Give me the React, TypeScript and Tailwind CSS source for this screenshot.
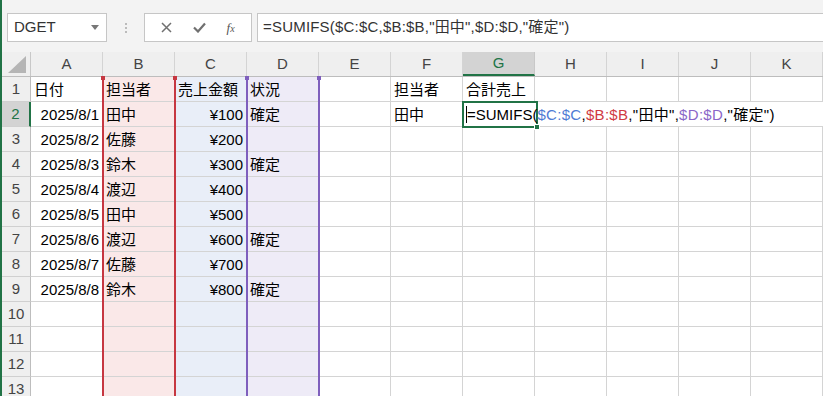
import type { ReactNode } from 'react'

const FONT = { fontFamily: '"Liberation Sans", "Noto Sans CJK JP", sans-serif' }

const COLS = ['A', 'B', 'C', 'D', 'E', 'F', 'G', 'H', 'I', 'J', 'K']

// fill per column index for the highlighted ranges
const FILL = ['', 'bg-[#fae8e8]', 'bg-[#e9eef8]', 'bg-[#eeebf7]', '', '', '', '', '', '', '']

type Cell = { v?: ReactNode; right?: boolean }

const DATA: Cell[][] = [
  [{ v: '日付' }, { v: '担当者' }, { v: '売上金額' }, { v: '状況' }, {}, { v: '担当者' }, { v: '合計売上' }],
  [{ v: '2025/8/1', right: true }, { v: '田中' }, { v: '¥100', right: true }, { v: '確定' }, {}, { v: '田中' }],
  [{ v: '2025/8/2', right: true }, { v: '佐藤' }, { v: '¥200', right: true }],
  [{ v: '2025/8/3', right: true }, { v: '鈴木' }, { v: '¥300', right: true }, { v: '確定' }],
  [{ v: '2025/8/4', right: true }, { v: '渡辺' }, { v: '¥400', right: true }],
  [{ v: '2025/8/5', right: true }, { v: '田中' }, { v: '¥500', right: true }],
  [{ v: '2025/8/6', right: true }, { v: '渡辺' }, { v: '¥600', right: true }, { v: '確定' }],
  [{ v: '2025/8/7', right: true }, { v: '佐藤' }, { v: '¥700', right: true }],
  [{ v: '2025/8/8', right: true }, { v: '鈴木' }, { v: '¥800', right: true }, { v: '確定' }],
  [], [], [], [],
]

function Formula() {
  return (
    <span className="relative z-10 whitespace-nowrap">
      =SUMIFS(
      <span className="tracking-[0.3px]">
        <span className="text-[#4f7bd4]">$C:$C</span>,<span className="text-[#d03a43]">$B:$B</span>,"田中",
        <span className="text-[#8a66c8]">$D:$D</span>,"確定")
      </span>
    </span>
  )
}

function RangeBox({ left, color, handle }: { left: string; color: string; handle: string }) {
  return (
    <div className={`absolute top-0 bottom-0 w-[74px] border-x-2 ${left} ${color}`}>
      <span className={`absolute -left-[3px] -top-[1px] w-[4px] h-[4px] ${handle}`} />
      <span className={`absolute -right-[3px] -top-[1px] w-[4px] h-[4px] ${handle}`} />
    </div>
  )
}

export default function App() {
  return (
    <div className="w-[823px] h-[396px] overflow-hidden flex bg-[#f3f3f3] text-black" style={FONT}>
      <div className="w-[2px] shrink-0 bg-[#217346]" />
      <div className="flex-1 min-w-0 flex flex-col">
        {/* name box + formula bar */}
        <div className="h-[52px] shrink-0 flex items-start pt-[13px] pl-[5px] gap-[5px]">
          <div className="w-[100px] h-[29px] shrink-0 bg-white border border-[#c6c6c6] flex items-center pl-[6px] pr-[7px]">
            <span className="flex-1 text-[15px] text-[#333]">DGET</span>
            <svg width="8" height="5" viewBox="0 0 8 5"><path d="M0 0h8L4 5z" fill="#777" /></svg>
          </div>
          <div className="w-[27px] h-[29px] shrink-0 flex flex-col items-center justify-center gap-[2px]">
            <span className="w-[2px] h-[2px] bg-[#bbb]" />
            <span className="w-[2px] h-[2px] bg-[#bbb]" />
            <span className="w-[2px] h-[2px] bg-[#bbb]" />
          </div>
          <div className="w-[108px] h-[29px] shrink-0 bg-white border border-[#c6c6c6] flex items-center justify-around px-[6px]">
            <svg width="11" height="11" viewBox="0 0 11 11"><path d="M1 1l9 9M10 1l-9 9" stroke="#707070" strokeWidth="1.5" /></svg>
            <svg width="13" height="11" viewBox="0 0 13 11"><path d="M1 5.5l4 4L12 1.5" stroke="#707070" strokeWidth="2.2" fill="none" /></svg>
            <span className="text-[13px] italic text-[#555]" style={{ fontFamily: '"Liberation Serif", serif' }}>
              f<span className="text-[10px]">x</span>
            </span>
          </div>
          <div className="flex-1 h-[29px] bg-white border border-[#c6c6c6] border-r-0 flex items-center pl-[5px] text-[15px] text-[#333] whitespace-nowrap tracking-[0.2px]">
            =SUMIFS($C:$C,$B:$B,"田中",$D:$D,"確定")
          </div>
        </div>

        {/* column headers */}
        <div className="h-[25px] shrink-0 flex bg-[#efefef] border-b border-[#bdbdbd]">
          <div className="w-[29px] shrink-0 border-r border-[#c8c8c8] flex items-end justify-end pr-[4px] pb-[3px]">
            <svg width="18" height="17" viewBox="0 0 18 17"><path d="M18 0v17H0z" fill="#b5b5b5" /></svg>
          </div>
          {COLS.map((c, i) =>
            i === 6 ? (
              <div key={c} className="w-[72px] shrink-0 flex items-center justify-center text-[15px] bg-[#d3d3d3] text-[#217346] border-r border-[#c8c8c8] border-b-2 border-b-[#217346]">
                {c}
              </div>
            ) : (
              <div key={c} className="w-[72px] shrink-0 flex items-center justify-center text-[15px] text-[#444] border-r border-[#d4d4d4]">
                {c}
              </div>
            ),
          )}
        </div>

        {/* sheet body */}
        <div className="relative flex-1 bg-white">
          {DATA.map((row, r) => (
            <div key={r} className="h-[25px] flex">
              <div
                className={`w-[29px] shrink-0 flex items-center justify-center text-[15px] border-b border-[#d0d0d0] ${
                  r === 1
                    ? 'bg-[#d3d3d3] text-[#217346] border-r-2 border-r-[#217346]'
                    : 'bg-[#efefef] text-[#444] border-r border-r-[#bdbdbd]'
                }`}
              >
                {r + 1}
              </div>
              {COLS.map((c, i) => {
                const cell = row[i] ?? {}
                const overflow = r === 1 && i >= 6
                return (
                  <div
                    key={c}
                    className={`w-[72px] shrink-0 flex items-center px-[3px] text-[15px] leading-none border-b border-[#d4d4d4] ${
                      overflow ? '' : 'border-r'
                    } ${cell.right ? 'justify-end' : ''} ${FILL[i]}`}
                  >
                    {r === 1 && i === 6 ? (
                      <span className="flex items-center">
                        <span className="w-px h-[17px] bg-black" />
                        <Formula />
                      </span>
                    ) : (
                      <span className="whitespace-nowrap">{cell.v}</span>
                    )}
                  </div>
                )
              })}
            </div>
          ))}

          {/* reference ranges of the formula being edited */}
          <RangeBox left="left-[172px]" color="border-[#5b80d0]" handle="bg-[#5b80d0]" />
          <RangeBox left="left-[100px]" color="border-[#c63741]" handle="bg-[#c63741]" />
          <RangeBox left="left-[244px]" color="border-[#7f5fbd]" handle="bg-[#7f5fbd]" />

          {/* active cell G2 */}
          <div className="absolute left-[460px] top-[24px] w-[76px] h-[27px] border-2 border-[#217346]">
            <span className="absolute -right-[4px] -bottom-[4px] w-[6px] h-[6px] bg-[#217346] border border-white" />
          </div>
        </div>
      </div>
    </div>
  )
}
